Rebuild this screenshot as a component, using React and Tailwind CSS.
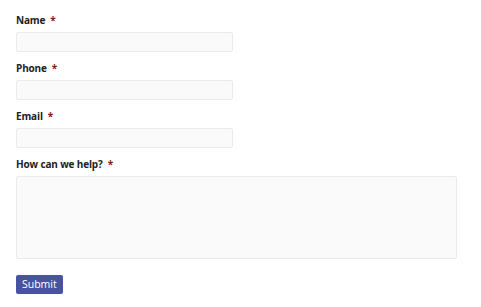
const fields = [
  { label: 'Name', type: 'text' },
  { label: 'Phone', type: 'tel' },
  { label: 'Email', type: 'email' },
]

function Label({ children }) {
  return (
    <label className="block text-[10px] leading-[16px] font-bold tracking-[-0.15px] text-[#222] mb-1">
      {children}
      <span className="ml-[5px] text-[#8b1c1c]">*</span>
    </label>
  )
}

export default function App() {
  return (
    <div className="min-h-screen bg-white px-4 pt-3" style={{ fontFamily: '"Open Sans", sans-serif' }}>
      <form onSubmit={e => e.preventDefault()}>
        {fields.map(f => (
          <div key={f.label} className="mb-2">
            <Label>{f.label}</Label>
            <input
              type={f.type}
              className="block w-[217px] h-5 bg-[#fafafa] border border-[#ebebeb] rounded-[2px] outline-none"
            />
          </div>
        ))}
        <div>
          <Label>How can we help?</Label>
          <textarea className="block w-[441px] h-[83px] bg-[#fafafa] border border-[#ebebeb] rounded-[2px] resize-none outline-none" />
        </div>
        <button
          type="submit"
          className="mt-4 h-[19px] px-[6px] bg-[#4853a0] text-white text-[10.5px] leading-[19px] rounded-[2px]"
        >
          Submit
        </button>
      </form>
    </div>
  )
}
